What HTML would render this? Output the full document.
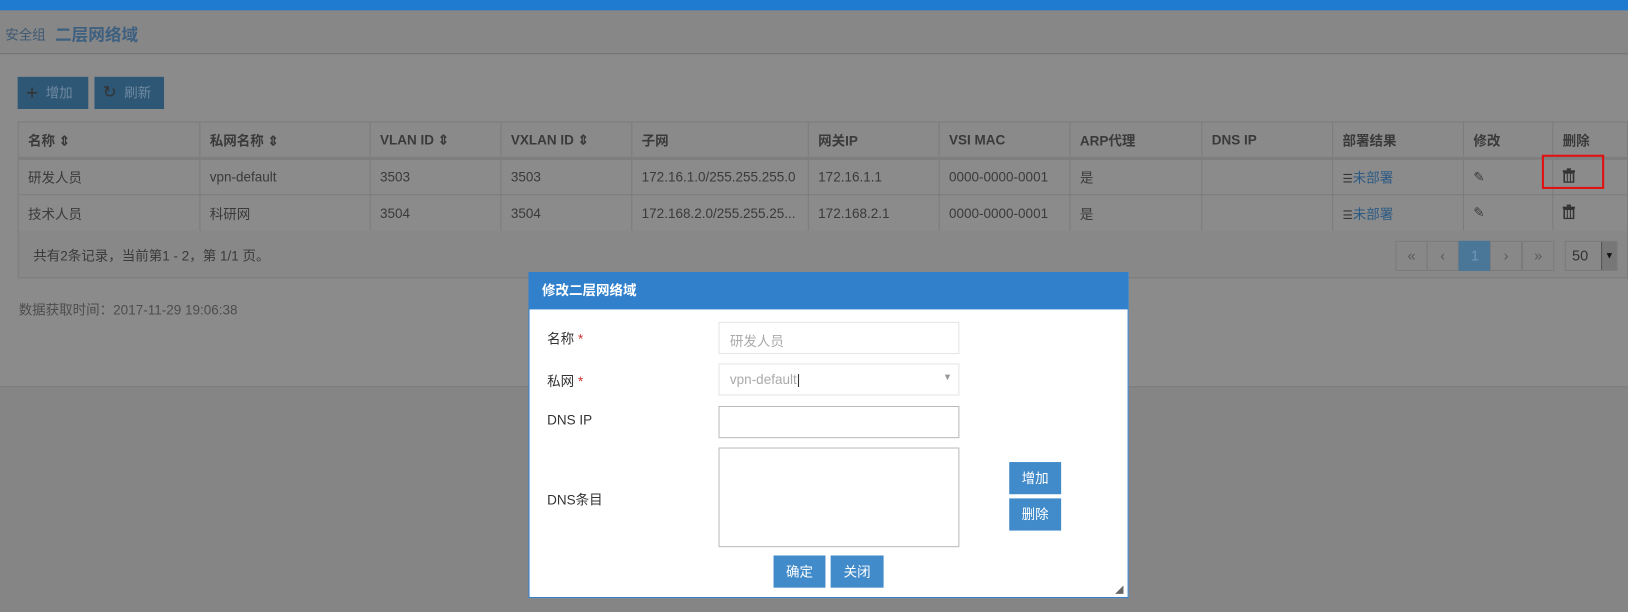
<!DOCTYPE html>
<html><head><meta charset="utf-8"><style>
*{box-sizing:border-box;margin:0;padding:0}
html,body{width:1628px;height:611px;overflow:hidden;background:#858585}
#w{position:absolute;left:0;top:0;width:1568px;height:589px;transform:scale(1.0383);transform-origin:0 0;font-family:"Liberation Sans","Noto Sans CJK SC",sans-serif;font-size:13px;color:#3a3a3a}
.a{position:absolute}
table{border-collapse:collapse;position:absolute;left:17px;top:117px;width:1551px;table-layout:fixed}
td,th{border:1px solid #7c7c7c;height:35px;padding-left:9px;text-align:left;white-space:nowrap;overflow:hidden}
th{font-weight:bold;background:#8a8a8a;border-bottom:3px solid #7e7e7e}
.btn{position:absolute;background:#428bca;color:#fff;text-align:center;font-size:13px}
.inp{position:absolute;border:1px solid #ccc;background:#fff}
.pg{position:absolute;top:232px;width:31px;height:29px;border:1px solid #7b7b7b;text-align:center;line-height:27px;color:#5a5a5a;font-size:14px}
</style></head><body><div id="w">
<div class="a" style="left:0;top:0;width:1568px;height:10px;background:#1e7bd0"></div>
<div class="a" style="left:0;top:10px;width:1568px;height:42px;background:#878787;border-bottom:1px solid #767676"></div>
<div class="a" style="left:0;top:53px;width:1568px;height:320px;background:#8b8b8b;border-bottom:1px solid #7a7a7a"></div>
<div class="a" style="left:5px;top:23px;font-size:13px;color:#3e5a73">安全组</div>
<div class="a" style="left:53px;top:20px;font-size:16px;font-weight:bold;color:#3d6080">二层网络域</div>
<div class="a" style="left:17px;top:74px;width:68px;height:31px;background:#2e5675;color:#6f8aa1;line-height:31px;padding-left:8px;font-size:13px"><span style="font-size:20px;vertical-align:-2px;color:#333">+</span>&nbsp; 增加</div>
<div class="a" style="left:91px;top:74px;width:67px;height:31px;background:#2e5675;color:#6f8aa1;line-height:31px;padding-left:8px;font-size:13px"><span style="font-size:16px;color:#333">↻</span>&nbsp; 刷新</div>
<table>
<colgroup><col style="width:175px"><col style="width:164px"><col style="width:126px"><col style="width:126px"><col style="width:170px"><col style="width:126px"><col style="width:126px"><col style="width:127px"><col style="width:126px"><col style="width:126px"><col style="width:86px"><col></colgroup>
<tr><th>名称 ⇕</th><th>私网名称 ⇕</th><th>VLAN ID ⇕</th><th>VXLAN ID ⇕</th><th>子网</th><th>网关IP</th><th>VSI MAC</th><th>ARP代理</th><th>DNS IP</th><th>部署结果</th><th>修改</th><th>删除</th></tr>
<tr><td>研发人员</td><td>vpn-default</td><td>3503</td><td>3503</td><td>172.16.1.0/255.255.255.0</td><td>172.16.1.1</td><td>0000-0000-0001</td><td>是</td><td></td><td><span style="font-size:11px;color:#333">☰</span><span style="color:#2b5a85">未部署</span></td><td>✎</td><td><svg width="12" height="14" viewBox="0 0 12 14"><rect x="0" y="2" width="12" height="2" fill="#333"/><rect x="4" y="0" width="4" height="2" fill="#333"/><rect x="1.5" y="4.5" width="9" height="9" fill="none" stroke="#333" stroke-width="1.5"/><path d="M4.5 5v8M7.5 5v8" stroke="#333"/></svg></td></tr>
<tr><td>技术人员</td><td>科研网</td><td>3504</td><td>3504</td><td>172.168.2.0/255.255.25...</td><td>172.168.2.1</td><td>0000-0000-0001</td><td>是</td><td></td><td><span style="font-size:11px;color:#333">☰</span><span style="color:#2b5a85">未部署</span></td><td>✎</td><td><svg width="12" height="14" viewBox="0 0 12 14"><rect x="0" y="2" width="12" height="2" fill="#333"/><rect x="4" y="0" width="4" height="2" fill="#333"/><rect x="1.5" y="4.5" width="9" height="9" fill="none" stroke="#333" stroke-width="1.5"/><path d="M4.5 5v8M7.5 5v8" stroke="#333"/></svg></td></tr>
</table>
<div class="a" style="left:1485px;top:149px;width:60px;height:33px;border:2px solid #e01010"></div>
<div class="a" style="left:17px;top:222px;width:1551px;height:46px;background:#888;border:1px solid #7c7c7c;border-top:none"></div>
<div class="a" style="left:32px;top:236px">共有2条记录，当前第1 - 2，第 1/1 页。</div>
<div class="pg" style="left:1344px">«</div><div class="pg" style="left:1374px">‹</div><div class="pg" style="left:1405px;background:#4a7698;color:#6f98b8;border-color:#4a7698">1</div><div class="pg" style="left:1435px">›</div><div class="pg" style="left:1466px">»</div>
<div class="a" style="left:1507px;top:232px;width:51px;height:29px;border:1px solid #7b7b7b;line-height:27px;padding-left:6px;color:#333;font-size:14px">50</div>
<div class="a" style="left:1542px;top:233px;width:15px;height:27px;background:#777;border-left:1px solid #555;color:#111;font-size:9px;text-align:center;line-height:27px">▼</div>
<div class="a" style="left:18px;top:288px;color:#4d4d4d">数据获取时间：2017-11-29 19:06:38</div>
<div class="a" style="left:509px;top:262px;width:578px;height:314px;background:#fff;border:1px solid #2f7fcc"></div>
<div class="a" style="left:509px;top:262px;width:578px;height:36px;background:#3180cc;color:#fff;font-weight:bold;line-height:36px;padding-left:13px">修改二层网络域</div>
<div class="a" style="left:527px;top:316px;color:#333">名称 <span style="color:#c33">*</span></div>
<div class="a" style="left:527px;top:357px;color:#333">私网 <span style="color:#c33">*</span></div>
<div class="a" style="left:527px;top:397px;color:#333">DNS IP</div>
<div class="a" style="left:527px;top:471px;color:#333">DNS条目</div>
<div class="inp" style="left:692px;top:310px;width:232px;height:31px;border-color:#e5e5e5;color:#aaa;padding:7px 10px">研发人员</div>
<div class="inp" style="left:692px;top:350px;width:232px;height:31px;border-color:#e5e5e5;color:#aaa;padding:7px 10px">vpn-default<span style="color:#333">|</span><span style="position:absolute;right:6px;top:7px;font-size:9px;color:#999">▼</span></div>
<div class="inp" style="left:692px;top:391px;width:232px;height:31px;border-color:#bbb"></div>
<div class="inp" style="left:692px;top:431px;width:232px;height:96px;border-color:#bbb"></div>
<div class="btn" style="left:972px;top:445px;width:50px;height:31px;line-height:31px">增加</div>
<div class="btn" style="left:972px;top:480px;width:50px;height:31px;line-height:31px">删除</div>
<div class="btn" style="left:745px;top:535px;width:50px;height:31px;line-height:31px">确定</div>
<div class="btn" style="left:800px;top:535px;width:51px;height:31px;line-height:31px">关闭</div>
<div class="a" style="left:1074px;top:563px;font-size:8px;color:#666">◢</div>
</div></body></html>
